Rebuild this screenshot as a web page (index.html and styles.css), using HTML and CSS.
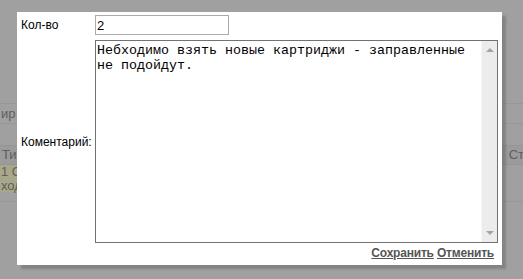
FILE: index.html
```html
<!DOCTYPE html>
<html lang="ru">
<head>
<meta charset="utf-8">
<title>Редактирование</title>
<link rel="stylesheet" href="styles.css">
</head>
<body>
<div class="page">
  <div class="toolbar"><span class="tb-text">ир</span></div>
  <div class="thead">
    <div class="th th-left">Ти</div>
    <div class="th th-right">Ст</div>
  </div>
  <div class="trow">
    <div class="td td-hl">1 О<br>ход</div>
    <div class="td"></div>
  </div>
  <div class="trow2"></div>
</div>

<div class="dialog">
  <div class="form">
    <label class="lbl">Кол-во</label>
    <input class="qty" type="text" value="2">
    <label class="lbl">Коментарий:</label>
    <div class="ta-wrap">
      <textarea class="ta">Небходимо взять новые картриджи - заправленные не подойдут.</textarea>
      <div class="sbar">
        <span class="arr arr-up"></span>
        <span class="arr arr-down"></span>
      </div>
    </div>
  </div>
  <div class="actions">
    <a href="#" class="lnk">Сохранить</a> <a href="#" class="lnk">Отменить</a>
  </div>
</div>
</body>
</html>
```
FILE: styles.css
```css
html, body {
  margin: 0;
  padding: 0;
}
body {
  width: 523px;
  height: 279px;
  overflow: hidden;
  background: #a0a0a0;
  font-family: "Liberation Sans", Arial, sans-serif;
  position: relative;
}
.page {
  padding-top: 103px;
  color: #5e5e5e;
  font-size: 13px;
}
.toolbar {
  height: 19px;
  border-top: 1px solid #989898;
  border-bottom: 1px solid #989898;
  line-height: 19px;
  white-space: nowrap;
}
.tb-text {
  margin-left: 1px;
}
.thead {
  margin-top: 21px;
  height: 18px;
  border-top: 1px solid #959595;
  border-bottom: 1px solid #959595;
  background: #9b9b9b;
  display: flex;
  line-height: 18px;
  white-space: nowrap;
}
.th-left { margin-left: 2px; }
.th-right { margin-left: auto; margin-right: -1px; }
.trow {
  display: flex;
  height: 27px;
}
.td {
  line-height: 14px;
  white-space: nowrap;
}
.td-hl {
  width: 200px;
  background: #a9a78a;
  padding-left: 1px;
}
.trow2 {
  margin-top: 9px;
  border-top: 1px solid #989898;
}

.dialog {
  position: absolute;
  left: 17px;
  top: 12px;
  width: 485px;
  height: 253px;
  box-sizing: border-box;
  background: #fff;
  box-shadow: 4px 4px 2px rgba(0, 0, 0, 0.18);
  padding: 3px 4px 0 4px;
}
.form {
  display: grid;
  grid-template-columns: 74px 1fr;
  row-gap: 5px;
  align-items: center;
}
.lbl {
  font-size: 12px;
  color: #000;
}
.qty {
  width: 134px;
  height: 20px;
  box-sizing: border-box;
  border: 1px solid #ababab;
  padding: 0 1px;
  margin: 0;
  font-family: "Liberation Sans", Arial, sans-serif;
  font-size: 13px;
  color: #000;
  outline: none;
}
.ta-wrap {
  height: 203px;
  box-sizing: border-box;
  border: 1px solid #727272;
  display: flex;
}
.ta {
  flex: 1;
  border: none;
  margin: 0;
  padding: 2px 1px;
  resize: none;
  overflow: hidden;
  font-family: "Liberation Mono", "Courier New", monospace;
  font-size: 13.333px;
  line-height: 15px;
  color: #000;
  outline: none;
}
.sbar {
  width: 16px;
  background: #ececec;
  border-left: 1px solid #f6f6f6;
  display: flex;
  flex-direction: column;
  justify-content: space-between;
  align-items: center;
  padding: 7px 0 7px 0;
  box-sizing: border-box;
}
.arr {
  width: 0;
  height: 0;
  border-left: 4px solid transparent;
  border-right: 4px solid transparent;
}
.arr-up {
  border-bottom: 4px solid #a3a3a3;
}
.arr-down {
  border-top: 4px solid #a3a3a3;
}
.actions {
  text-align: right;
  padding-top: 3px;
  padding-right: 4px;
  font-size: 12px;
  line-height: 15px;
  letter-spacing: -0.2px;
}
.lnk {
  color: #555;
  font-weight: bold;
  text-decoration: underline;
}
```
